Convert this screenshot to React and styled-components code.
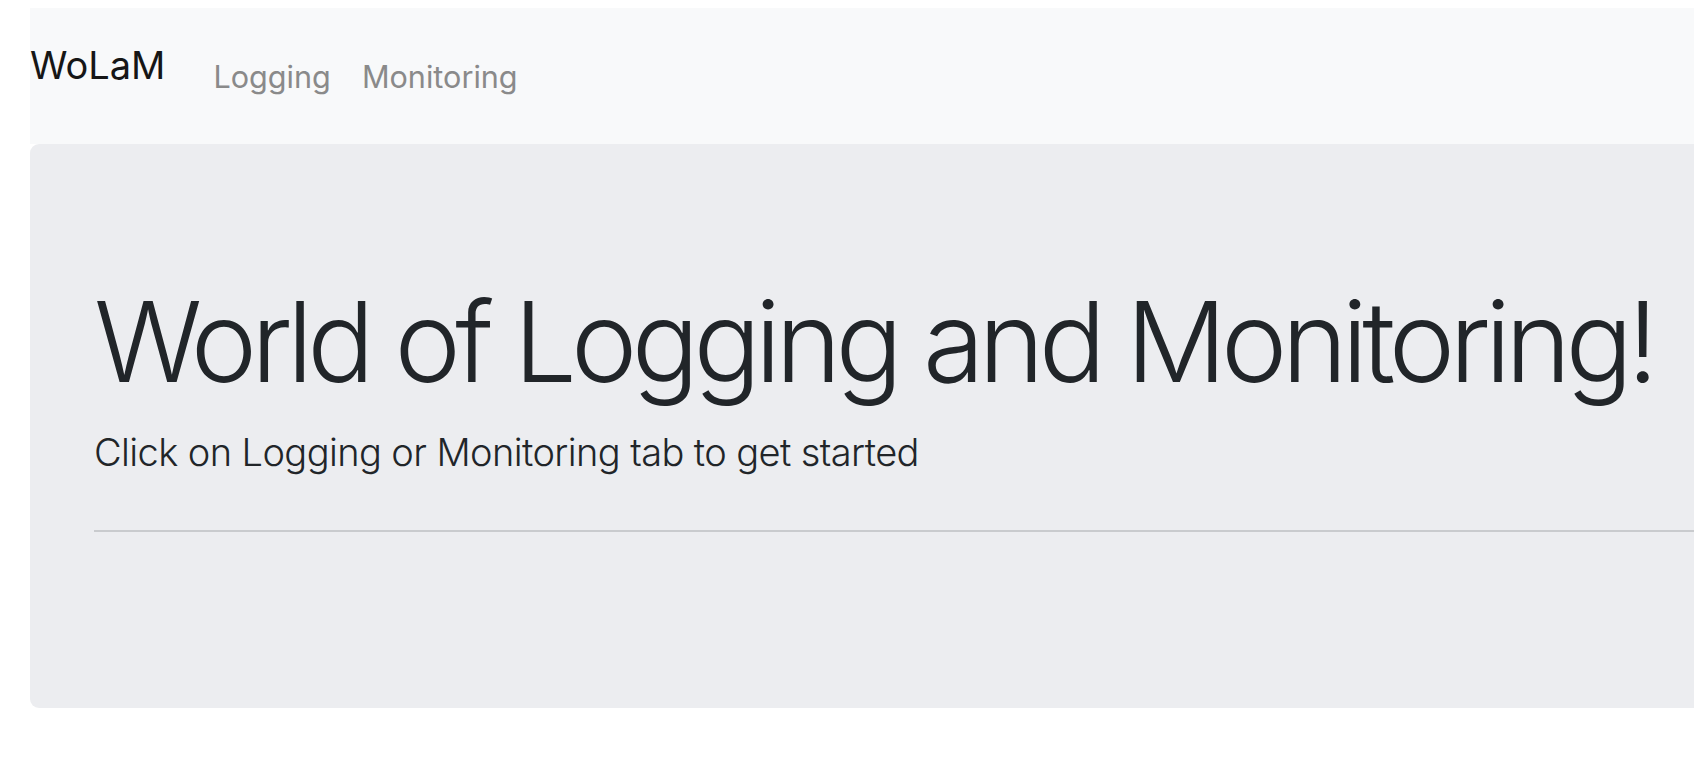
import React from "react";
import styled, { createGlobalStyle } from "styled-components";

const GlobalStyle = createGlobalStyle`
  html, body {
    margin: 0;
    padding: 0;
    overflow: hidden;
    background: #ffffff;
  }
  body {
    font-family: Inter, "Noto Sans", "Liberation Sans", sans-serif;
    color: #212529;
  }
`;

const Page = styled.div`
  padding: 8px 0 0 30px;
  width: 1760px;
`;

const Navbar = styled.nav`
  display: flex;
  align-items: flex-start;
  height: 136px;
  box-sizing: border-box;
  padding-top: 38px;
  background: #f8f9fa;
`;

const Brand = styled.a`
  font-size: 38px;
  line-height: 38px;
  font-weight: 400;
  color: #161616;
  margin-right: 48px;
  text-decoration: none;
`;

const NavLinks = styled.div`
  display: flex;
  gap: 31px;
  margin-top: 12px;
`;

const NavLink = styled.a`
  font-size: 30.6px;
  line-height: 38px;
  color: #8a8a8a;
  text-decoration: none;
  cursor: pointer;
`;

const Jumbotron = styled.section`
  background: #ecedf0;
  border-radius: 9px 0 0 9px;
  height: 564px;
  box-sizing: border-box;
  padding: 137px 0 0 64px;
`;

const Heading = styled.h1`
  margin: 0;
  font-size: 112px;
  line-height: 120px;
  font-weight: 300;
  letter-spacing: -5.8px;
  white-space: nowrap;
  color: #212529;
`;

const Lead = styled.p`
  margin: 27px 0 0 0;
  font-size: 38px;
  line-height: 48px;
  font-weight: 300;
  letter-spacing: -0.6px;
  color: #212529;
`;

const Divider = styled.hr`
  margin: 54px 0 0 0;
  border: none;
  border-top: 2px solid #c9cbce;
`;

export default function App() {
  return (
    <>
      <GlobalStyle />
      <Page>
        <Navbar>
          <Brand href="#">WoLaM</Brand>
          <NavLinks>
            <NavLink>Logging</NavLink>
            <NavLink>Monitoring</NavLink>
          </NavLinks>
        </Navbar>
        <Jumbotron>
          <Heading>World of Logging and Monitoring!</Heading>
          <Lead>Click on Logging or Monitoring tab to get started</Lead>
          <Divider />
        </Jumbotron>
      </Page>
    </>
  );
}
